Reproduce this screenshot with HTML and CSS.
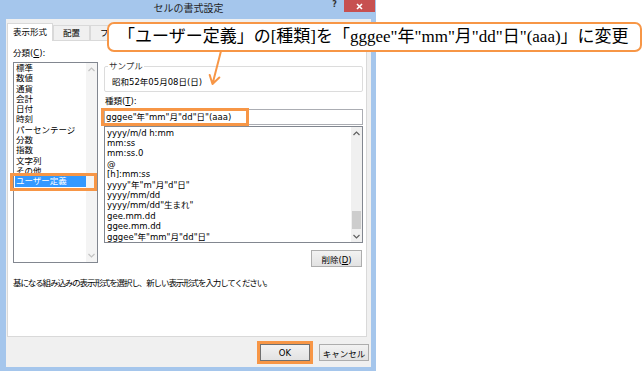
FILE: index.html
```html
<!DOCTYPE html>
<html lang="ja">
<head>
    <meta charset="UTF-8">
    <title>セルの書式設定</title>
    <link rel="stylesheet" href="styles.css">
</head>
<body>
    <div class="window">
        <div class="titlebar">
            <span class="title">セルの書式設定</span>
            <div class="controls">
                <span class="help">?</span>
                <span class="close">
                    <svg width="7" height="7" viewBox="0 0 7 7"><path d="M1 1L6 6M6 1L1 6" stroke="#fff" stroke-width="1.6"/></svg>
                </span>
            </div>
        </div>

        <div class="dialog">
            <div class="tabs">
                <div class="tab active">表示形式</div>
                <div class="tab">配置</div>
                <div class="tab">フォ</div>
            </div>

            <div class="panel">
                <div class="panel-main">
                    <div class="col-left">
                        <div class="label">分類(<u>C</u>):</div>
                        <div class="listbox category">
                            <ul>
                                <li>標準</li>
                                <li>数値</li>
                                <li>通貨</li>
                                <li>会計</li>
                                <li>日付</li>
                                <li>時刻</li>
                                <li>パーセンテージ</li>
                                <li>分数</li>
                                <li>指数</li>
                                <li>文字列</li>
                                <li>その他</li>
                                <li class="selected">ユーザー定義</li>
                            </ul>
                            <div class="scrollbar disabled">
                                <div class="sb-btn"><svg width="7" height="5" viewBox="0 0 7 5"><polyline points="0.5,4 3.5,1 6.5,4" fill="none" stroke="currentColor" stroke-width="1.2"/></svg></div>
                                <div class="sb-track"></div>
                                <div class="sb-btn"><svg width="7" height="5" viewBox="0 0 7 5"><polyline points="0.5,1 3.5,4 6.5,1" fill="none" stroke="currentColor" stroke-width="1.2"/></svg></div>
                            </div>
                        </div>
                    </div>

                    <div class="col-right">
                        <fieldset class="sample">
                            <legend>サンプル</legend>
                            <div class="sample-value">昭和52年05月08日(日)</div>
                        </fieldset>
                        <div class="label type-label">種類(<u>T</u>):</div>
                        <div class="input-wrap">
                            <div class="input">gggee"年"mm"月"dd"日"(aaa)</div>
                            <span class="mark-input"></span>
                        </div>
                        <div class="listbox formats">
                            <ul>
                                <li>yyyy/m/d h:mm</li>
                                <li>mm:ss</li>
                                <li>mm:ss.0</li>
                                <li>@</li>
                                <li>[h]:mm:ss</li>
                                <li>yyyy"年"m"月"d"日"</li>
                                <li>yyyy/mm/dd</li>
                                <li>yyyy/mm/dd"生まれ"</li>
                                <li>gee.mm.dd</li>
                                <li>ggee.mm.dd</li>
                                <li>gggee"年"mm"月"dd"日"</li>
                            </ul>
                            <div class="scrollbar">
                                <div class="sb-btn"><svg width="7" height="5" viewBox="0 0 7 5"><polyline points="0.5,4 3.5,1 6.5,4" fill="none" stroke="currentColor" stroke-width="1.2"/></svg></div>
                                <div class="sb-track"><div class="sb-thumb"></div></div>
                                <div class="sb-btn"><svg width="7" height="5" viewBox="0 0 7 5"><polyline points="0.5,1 3.5,4 6.5,1" fill="none" stroke="currentColor" stroke-width="1.2"/></svg></div>
                            </div>
                        </div>
                        <div class="delete-row">
                            <button class="btn btn-delete">削除(<u>D</u>)</button>
                        </div>
                    </div>
                </div>
                <p class="desc">基になる組み込みの表示形式を選択し、新しい表示形式を入力してください。</p>
            </div>

            <div class="footer">
                <button class="btn btn-ok">OK</button>
                <button class="btn">キャンセル</button>
            </div>
        </div>
    </div>

    <!-- 吹き出し -->
    <div class="callout">「ユーザー定義」の[種類]を「gggee"年"mm"月"dd"日"(aaa)」に変更</div>
    <svg class="arrow" width="30" height="40" viewBox="0 0 30 40">
        <path d="M21 1L12.5 34M9.7 25L12.5 34L19.3 27.5" fill="none" stroke="#f79646" stroke-width="2" stroke-linecap="round" stroke-linejoin="round"/>
    </svg>
</body>
</html>
```

FILE: styles.css
```css
body {
    margin: 0;
    width: 643px;
    height: 371px;
    position: relative;
    overflow: hidden;
    background: #fff;
    font-family: "DejaVu Sans", "Noto Sans CJK JP", sans-serif;
    font-size: 8.5px;
    color: #000;
}

ul {
    list-style: none;
    margin: 0;
    padding: 0;
}

.window {
    width: 376px;
    height: 371px;
    box-sizing: border-box;
    padding: 0 5px 4px 6px;
    background: #a5c6ec;
    display: flex;
    flex-direction: column;
}

.titlebar {
    height: 19px;
    display: grid;
    grid-template-columns: 1fr auto 1fr;
    align-items: start;
}

.title {
    grid-column: 2;
    font-family: "Noto Sans CJK JP", sans-serif;
    font-size: 10px;
    line-height: 14px;
    padding-top: 1px;
    color: #1e1e1e;
}

.controls {
    grid-column: 3;
    justify-self: end;
    display: flex;
    align-items: flex-start;
    margin-right: -4px;
}

.help {
    font-weight: bold;
    font-size: 8px;
    line-height: 10px;
    color: #333;
    margin-right: 7px;
}

.close {
    width: 31px;
    height: 12px;
    background: #c75050;
    display: flex;
    align-items: center;
    justify-content: center;
}

.dialog {
    flex: 1;
    background: #f0f0f0;
    display: flex;
    flex-direction: column;
}

/* タブ */
.tabs {
    height: 22px;
    display: flex;
    align-items: flex-end;
    padding-left: 1px;
    overflow: hidden;
    position: relative;
    z-index: 1;
}

.tab {
    flex-shrink: 0;
    height: 15px;
    line-height: 15px;
    padding: 0 9px;
    margin-bottom: 1px;
    border: 1px solid #d9d9d9;
    border-bottom: none;
    box-sizing: border-box;
    background: #f0f0f0;
    white-space: nowrap;
}

.tab.active {
    height: 18px;
    line-height: 17px;
    padding: 0 5px;
    margin-bottom: 0;
    background: #fff;
}

.panel {
    height: 297px;
    margin: -1px 4px 0 1px;
    box-sizing: border-box;
    background: #fff;
    border: 1px solid #d9d9d9;
}

.panel-main {
    display: flex;
    padding-left: 5px;
}

.col-left {
    width: 85px;
}

.col-right {
    width: 259px;
    margin-left: 6px;
}

.label {
    line-height: 12px;
    margin-top: 6px;
}

/* リストボックス */
.listbox {
    display: flex;
    border: 1px solid #828790;
    box-sizing: border-box;
    background: #fff;
}

.listbox ul {
    flex: 1;
    min-width: 0;
}

.listbox li {
    padding-left: 2px;
    white-space: nowrap;
}

.category {
    height: 201px;
    margin-top: 3px;
}

.category li {
    line-height: 10.3px;
}

.category li.selected {
    position: relative;
    margin-left: 1px;
    padding-left: 1px;
    background: #3399ff;
    color: #fff;
}

.category li.selected::after {
    content: "";
    position: absolute;
    left: -5px;
    right: -11px;
    top: -3px;
    bottom: -4px;
    border: 3px solid #f79646;
}

.scrollbar {
    width: 11px;
    background: #f0f0f0;
    display: flex;
    flex-direction: column;
    color: #606060;
}

.scrollbar.disabled {
    color: #c2c2c2;
    background: #f4f4f4;
}

.sb-btn {
    height: 12px;
    display: flex;
    align-items: center;
    justify-content: center;
}

.category .sb-btn {
    height: 13px;
}

.sb-track {
    flex: 1;
    display: flex;
    flex-direction: column;
    justify-content: flex-end;
    padding-bottom: 1px;
}

.sb-thumb {
    height: 18px;
    margin: 0 1px;
    background: #cdcdcd;
}

/* サンプル */
.sample {
    margin: 20px 0 0;
    padding: 0 5px 3px 3px;
    border: 1px solid #dcdcdc;
    border-radius: 2px;
    min-width: 0;
}

.sample legend {
    padding: 0 1px;
    line-height: 10px;
    color: #333;
}

.sample-value {
    line-height: 12px;
    margin-top: 5px;
    padding-left: 4px;
}

.type-label {
    margin-top: 3px;
    padding-left: 1px;
}

.input-wrap {
    position: relative;
    margin-top: 2px;
}

.input {
    height: 16px;
    line-height: 14px;
    box-sizing: border-box;
    border: 1px solid #abadb3;
    padding-left: 1px;
}

.mark-input {
    position: absolute;
    left: -3px;
    top: -1px;
    width: 148px;
    height: 18px;
    box-sizing: border-box;
    border: 3px solid #f79646;
}

.formats {
    height: 117px;
    margin-top: 1px;
}

.formats ul {
    padding-top: 0.5px;
}

.formats li {
    line-height: 10.4px;
}

.delete-row {
    display: flex;
    justify-content: flex-end;
    margin-top: 7px;
    padding-right: 1px;
}

/* ボタン */
.btn {
    width: 50px;
    height: 17px;
    padding: 0;
    font-family: inherit;
    font-size: 8.5px;
    color: #000;
    background: linear-gradient(#f2f2f2, #e2e2e2);
    border: 1px solid #adadad;
}

.btn-delete {
    width: 51px;
}

.desc {
    margin: 10px 0 0;
    padding-left: 5px;
    line-height: 12px;
    letter-spacing: -1.1px;
}

.footer {
    display: flex;
    justify-content: flex-end;
    gap: 9px;
    padding: 7px 2px 0 0;
}

.btn-ok {
    border-color: #707070;
    outline: 3px solid #f79646;
}

/* 吹き出し */
.callout {
    position: absolute;
    z-index: 2;
    left: 107px;
    top: 22px;
    width: 535px;
    height: 30px;
    box-sizing: border-box;
    padding-left: 9px;
    background: #fff;
    border: 2px solid #f79646;
    border-radius: 7px;
    font-family: "Liberation Serif", "Noto Sans CJK JP", serif;
    font-size: 17px;
    line-height: 26px;
    white-space: nowrap;
}

.arrow {
    position: absolute;
    z-index: 2;
    left: 200px;
    top: 50px;
}
```
